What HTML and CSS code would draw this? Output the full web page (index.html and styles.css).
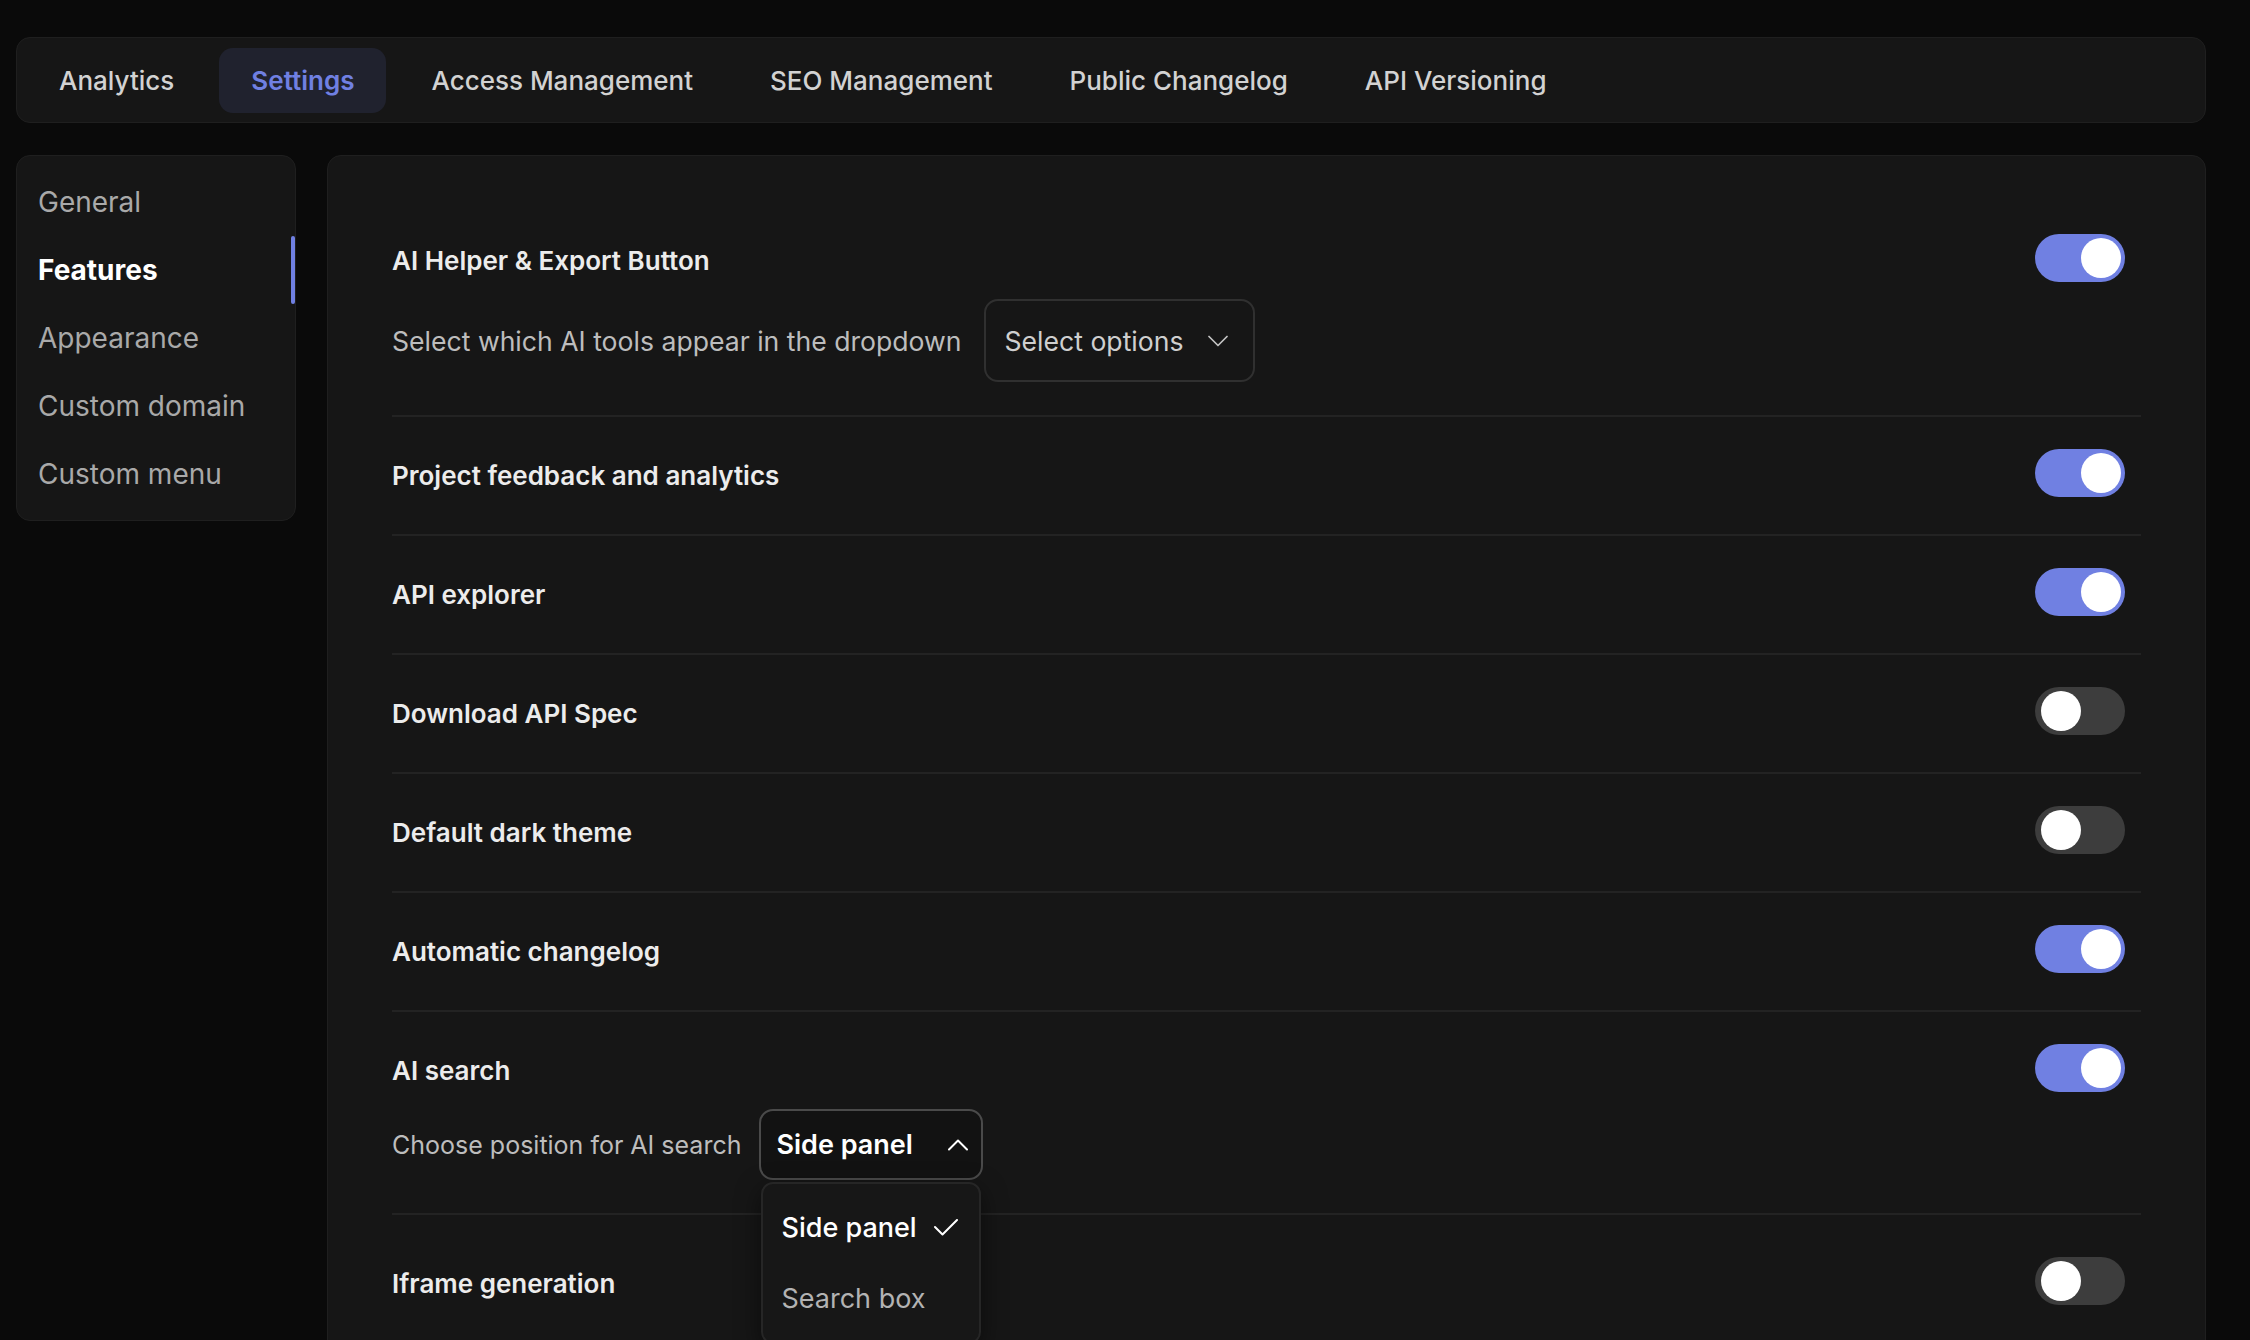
FILE: index.html
```html
<!DOCTYPE html>
<html lang="en">
<head>
    <meta charset="UTF-8">
    <meta name="viewport" content="width=device-width, initial-scale=1.0">
    <title>Project Settings - Features</title>
    <link rel="stylesheet" href="styles.css">
</head>
<body>

    <nav class="ps-topbar">
        <a class="ps-tab" href="#">Analytics</a>
        <a class="ps-tab ps-tab-active" href="#">Settings</a>
        <a class="ps-tab" href="#">Access Management</a>
        <a class="ps-tab" href="#">SEO Management</a>
        <a class="ps-tab" href="#">Public Changelog</a>
        <a class="ps-tab" href="#">API Versioning</a>
    </nav>

    <div class="ps-layout">
        <aside class="ps-sidenav">
            <a class="ps-side-item" href="#">General</a>
            <a class="ps-side-item ps-side-active" href="#">Features</a>
            <a class="ps-side-item" href="#">Appearance</a>
            <a class="ps-side-item" href="#">Custom domain</a>
            <a class="ps-side-item" href="#">Custom menu</a>
        </aside>

        <main class="ps-panel">
            <div class="ps-feature">
                <div class="ps-feature-head">
                    <span class="ps-feature-title">AI Helper &amp; Export Button</span>
                    <span class="ps-switch ps-on"></span>
                </div>
                <div class="ps-feature-sub">
                    <span class="ps-sub-label">Select which AI tools appear in the dropdown</span>
                    <div class="ps-select">
                        <span>Select options</span>
                        <svg class="ps-chevron" viewBox="0 0 20 12"><polyline points="1 1.5 10 10.5 19 1.5"/></svg>
                    </div>
                </div>
            </div>

            <div class="ps-feature">
                <div class="ps-feature-head">
                    <span class="ps-feature-title">Project feedback and analytics</span>
                    <span class="ps-switch ps-on"></span>
                </div>
            </div>

            <div class="ps-feature">
                <div class="ps-feature-head">
                    <span class="ps-feature-title">API explorer</span>
                    <span class="ps-switch ps-on"></span>
                </div>
            </div>

            <div class="ps-feature">
                <div class="ps-feature-head">
                    <span class="ps-feature-title">Download API Spec</span>
                    <span class="ps-switch"></span>
                </div>
            </div>

            <div class="ps-feature">
                <div class="ps-feature-head">
                    <span class="ps-feature-title">Default dark theme</span>
                    <span class="ps-switch"></span>
                </div>
            </div>

            <div class="ps-feature">
                <div class="ps-feature-head">
                    <span class="ps-feature-title">Automatic changelog</span>
                    <span class="ps-switch ps-on"></span>
                </div>
            </div>

            <div class="ps-feature">
                <div class="ps-feature-head">
                    <span class="ps-feature-title">AI search</span>
                    <span class="ps-switch ps-on"></span>
                </div>
                <div class="ps-feature-sub ps-sub-tight">
                    <span class="ps-sub-label ps-sub-small">Choose position for AI search</span>
                    <div class="ps-select ps-select-open">
                        <span>Side panel</span>
                        <svg class="ps-chevron" viewBox="0 0 20 12"><polyline points="1 10.5 10 1.5 19 10.5"/></svg>
                        <!-- open dropdown -->
                        <div class="ps-menu">
                            <div class="ps-menu-item ps-menu-selected">
                                <span>Side panel</span>
                                <svg class="ps-check" viewBox="0 0 24 17"><polyline points="1 8 8.5 15.5 23 1"/></svg>
                            </div>
                            <div class="ps-menu-item">
                                <span>Search box</span>
                            </div>
                        </div>
                    </div>
                </div>
            </div>

            <div class="ps-feature ps-feature-after-sub">
                <div class="ps-feature-head">
                    <span class="ps-feature-title">Iframe generation</span>
                    <span class="ps-switch"></span>
                </div>
            </div>
        </main>
    </div>

</body>
</html>
```

FILE: styles.css
```css
:root {
    --page-bg: #0a0a0a;
    --card-bg: #161616;
    --card-border: #1f1f1f;
    --divider: #232323;
    --accent: #7080e2;
    --accent-soft: #20222e;
    --text-strong: #ececec;
    --text: #d2d2d2;
    --text-muted: #a9a9a9;
    --switch-off: #3d3d3d;
}

html, body {
    height: 100%;
}

body {
    margin: 0;
    padding: 37px 44px 0 16px;
    box-sizing: border-box;
    background-color: var(--page-bg);
    font-family: Inter, "Noto Sans", Arial, sans-serif;
    color: var(--text);
    overflow: hidden;
}

a {
    text-decoration: none;
    color: inherit;
}

/* Top tabs */
.ps-topbar {
    display: flex;
    align-items: center;
    gap: 13px;
    height: 86px;
    padding: 0 10px;
    box-sizing: border-box;
    background-color: var(--card-bg);
    border: 1px solid var(--card-border);
    border-radius: 14px;
}

.ps-tab {
    display: flex;
    align-items: center;
    height: 65px;
    padding: 0 32px;
    border-radius: 14px;
    font-size: 26px;
    font-weight: 500;
    color: var(--text);
}

.ps-tab-active {
    background-color: var(--accent-soft);
    color: var(--accent);
    font-weight: 600;
}

/* Body layout */
.ps-layout {
    display: flex;
    align-items: flex-start;
    gap: 31px;
    margin-top: 32px;
}

.ps-sidenav {
    display: flex;
    flex-direction: column;
    width: 280px;
    flex-shrink: 0;
    padding: 12px 0;
    box-sizing: border-box;
    background-color: var(--card-bg);
    border: 1px solid var(--card-border);
    border-radius: 14px;
}

.ps-side-item {
    position: relative;
    display: flex;
    align-items: center;
    height: 68px;
    padding-left: 21px;
    font-size: 28px;
    color: var(--text-muted);
}

.ps-side-active {
    color: #fff;
    font-weight: 700;
}

.ps-side-active::after {
    content: "";
    position: absolute;
    right: 0;
    top: 0;
    width: 4px;
    height: 100%;
    border-radius: 2px;
    background-color: var(--accent);
}

/* Features panel */
.ps-panel {
    flex: 1;
    min-height: 1300px;
    padding: 46px 64px;
    background-color: var(--card-bg);
    border: 1px solid var(--card-border);
    border-radius: 14px;
}

.ps-feature {
    padding: 32px 0 37px;
    border-bottom: 2px solid var(--divider);
}

.ps-feature-after-sub {
    padding-top: 42px;
}

.ps-feature-head {
    display: flex;
    align-items: center;
    justify-content: space-between;
}

.ps-feature-title {
    padding-top: 4px;
    font-size: 26px;
    font-weight: 600;
    color: var(--text-strong);
}

.ps-feature-sub {
    display: flex;
    align-items: center;
    gap: 22px;
    margin-top: 17px;
    margin-bottom: -4px;
}

.ps-sub-tight {
    gap: 18px;
}

.ps-sub-label {
    font-size: 26.6px;
    color: #bdbdbd;
}

.ps-sub-small {
    font-size: 25px;
}

/* Toggle */
.ps-switch {
    position: relative;
    width: 90px;
    height: 48px;
    flex-shrink: 0;
    margin-right: 16px;
    border-radius: 24px;
    background-color: var(--switch-off);
}

.ps-switch::after {
    content: "";
    position: absolute;
    top: 4px;
    left: 6px;
    width: 40px;
    height: 40px;
    border-radius: 50%;
    background-color: #fff;
}

.ps-on {
    background-color: var(--accent);
}

.ps-on::after {
    left: auto;
    right: 4px;
}

/* Select */
.ps-select {
    position: relative;
    display: flex;
    align-items: center;
    gap: 25px;
    height: 83px;
    padding: 0 25px 0 19px;
    box-sizing: border-box;
    border: 2px solid #303030;
    border-radius: 14px;
    font-size: 26.6px;
    color: #cfcfcf;
}

.ps-select-open {
    justify-content: space-between;
    width: 224px;
    height: 71px;
    padding: 0 13px 0 15px;
    border-color: #4a4a4a;
    background-color: #121212;
    color: #fff;
    font-size: 27px;
    font-weight: 600;
}

.ps-chevron {
    width: 20px;
    height: 12px;
    fill: none;
    stroke: #c4c4c4;
    stroke-width: 1.7;
    stroke-linecap: round;
    stroke-linejoin: round;
}

.ps-select-open .ps-chevron {
    stroke: #fff;
    stroke-width: 2;
}

.ps-menu {
    position: absolute;
    top: calc(100% + 4px);
    left: 0;
    width: 220px;
    box-sizing: border-box;
    padding: 8px 0;
    background-color: #171717;
    border: 2px solid #262626;
    border-radius: 12px;
    box-shadow: 0 8px 24px rgba(0, 0, 0, 0.5);
    z-index: 5;
}

.ps-menu-item {
    display: flex;
    align-items: center;
    justify-content: space-between;
    height: 71px;
    padding: 0 21px 0 18px;
    font-size: 27px;
    font-weight: 400;
    color: #b3b3b3;
}

.ps-menu-selected {
    color: #fff;
    font-weight: 500;
}

.ps-check {
    width: 24px;
    height: 17px;
    fill: none;
    stroke: #fff;
    stroke-width: 2;
    stroke-linecap: round;
    stroke-linejoin: round;
}
```
